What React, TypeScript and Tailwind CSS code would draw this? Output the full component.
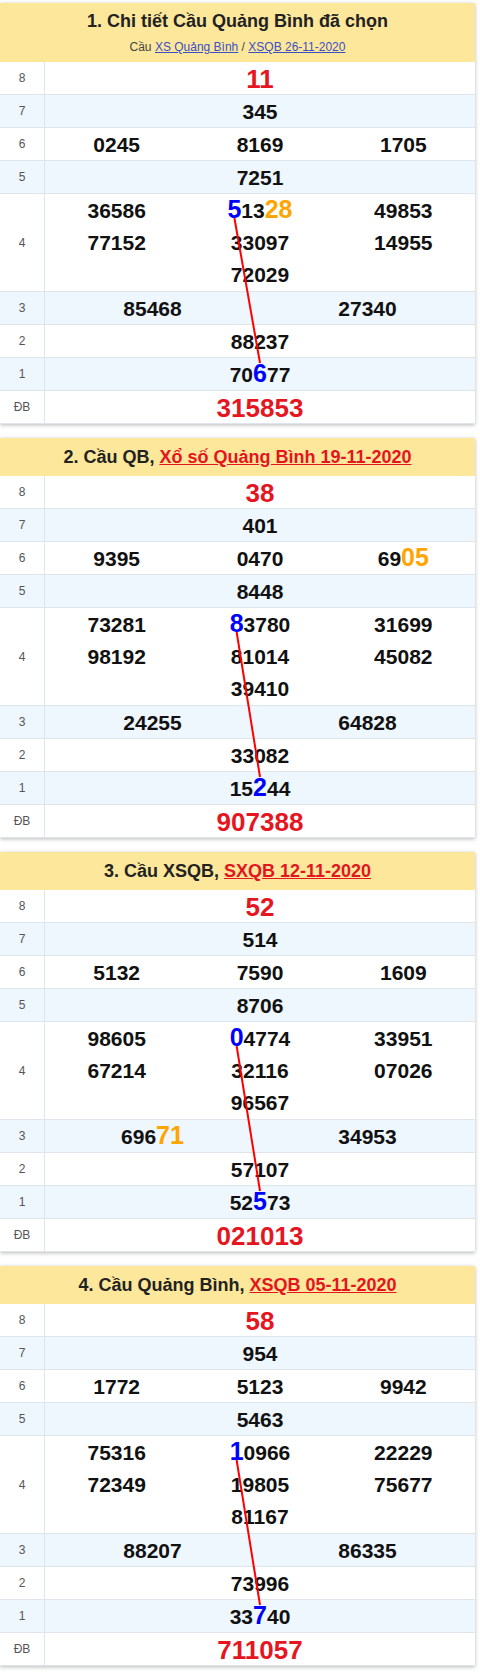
import { useLayoutEffect, useRef, useState, type ReactNode } from 'react'

type Card = {
  title: ReactNode
  g8: string
  g7: string
  g6: string[]
  g5: string
  g4: string[]
  g3: string[]
  g2: string
  g1: string
  db: string
}

const link = 'text-[#e3151f] underline'

const cards: Card[] = [
  {
    title: (
      <div className="px-2 pt-[6px] pb-[6px]">
        <div className="text-[18px] font-bold leading-6 text-[#222]">1. Chi tiết Cầu Quảng Bình đã chọn</div>
        <div className="mt-[5px] text-[12px] leading-[18px] text-[#444]">
          Cầu <a className="text-[#3b4fc4] underline">XS Quảng Bình</a> / <a className="text-[#3b4fc4] underline">XSQB 26-11-2020</a>
        </div>
      </div>
    ),
    g8: '11', g7: '345', g6: ['0245', '8169', '1705'], g5: '7251',
    g4: ['36586', '[5]13{28}', '49853', '77152', '33097', '14955', '72029'],
    g3: ['85468', '27340'], g2: '88237', g1: '70[6]77', db: '315853',
  },
  {
    title: <>2. Cầu QB, <a className={link}>Xổ số Quảng Bình 19-11-2020</a></>,
    g8: '38', g7: '401', g6: ['9395', '0470', '69{05}'], g5: '8448',
    g4: ['73281', '[8]3780', '31699', '98192', '81014', '45082', '39410'],
    g3: ['24255', '64828'], g2: '33082', g1: '15[2]44', db: '907388',
  },
  {
    title: <>3. Cầu XSQB, <a className={link}>SXQB 12-11-2020</a></>,
    g8: '52', g7: '514', g6: ['5132', '7590', '1609'], g5: '8706',
    g4: ['98605', '[0]4774', '33951', '67214', '32116', '07026', '96567'],
    g3: ['696{71}', '34953'], g2: '57107', g1: '52[5]73', db: '021013',
  },
  {
    title: <>4. Cầu Quảng Bình, <a className={link}>XSQB 05-11-2020</a></>,
    g8: '58', g7: '954', g6: ['1772', '5123', '9942'], g5: '5463',
    g4: ['75316', '[1]0966', '22229', '72349', '19805', '75677', '81167'],
    g3: ['88207', '86335'], g2: '73996', g1: '33[7]40', db: '711057',
  },
]

// [x] = blue (cau digit), {x} = orange
function Num({ v, red }: { v: string; red?: boolean }) {
  const parts: ReactNode[] = []
  const re = /\[(\d+)\]|\{(\d+)\}|(\d+)/g
  let m: RegExpExecArray | null
  let i = 0
  while ((m = re.exec(v))) {
    if (m[1]) parts.push(<span key={i++} data-blue className="text-[25px] leading-none text-[#0000ff]">{m[1]}</span>)
    else if (m[2]) parts.push(<span key={i++} className="text-[25px] leading-none text-[#ffa500]">{m[2]}</span>)
    else parts.push(m[3])
  }
  return (
    <span className={red ? 'text-[26px] font-bold text-[#e5161f]' : 'text-[21px] font-bold text-[#111]'}>{parts}</span>
  )
}

function Row({ label, alt, children }: { label: string; alt?: boolean; children: ReactNode }) {
  return (
    <div className={`flex border-b border-[#dfe5ec] ${alt ? 'bg-[#eef6fe]' : 'bg-white'}`}>
      <div className="w-[45px] shrink-0 border-r border-[#dfe5ec] flex items-center justify-center text-[12px] text-[#555]">
        {label}
      </div>
      <div className="flex-1 min-w-0 text-center">{children}</div>
    </div>
  )
}

function Line({ children }: { children: ReactNode }) {
  return <div className="h-[32px] pt-[2px] leading-[30px]">{children}</div>
}

function CauCard({ c, first }: { c: Card; first?: boolean }) {
  const ref = useRef<HTMLDivElement>(null)
  const [pts, setPts] = useState<number[] | null>(null)

  useLayoutEffect(() => {
    const measure = () => {
      const el = ref.current
      if (!el) return
      const box = el.getBoundingClientRect()
      const b = el.querySelectorAll('[data-blue]')
      if (b.length < 2) return
      const s = b[0].getBoundingClientRect()
      const e = b[b.length - 1].getBoundingClientRect()
      setPts([
        s.left + s.width / 2 - box.left,
        s.bottom - box.top - 5,
        e.left + e.width / 2 - box.left,
        e.top - box.top + 4,
      ])
    }
    measure()
    window.addEventListener('load', measure)
    return () => window.removeEventListener('load', measure)
  }, [])

  const g4 = c.g4
  return (
    <div ref={ref} className="relative bg-white shadow-[0_1px_4px_rgba(0,0,0,0.28)]">
      <div className={`bg-[#fde79b] text-center ${first ? '' : 'py-[7px] px-2 text-[18px] font-bold leading-6 text-[#222]'}`}>
        {c.title}
      </div>
      <Row label="8"><Line><Num v={c.g8} red /></Line></Row>
      <Row label="7" alt><Line><Num v={c.g7} /></Line></Row>
      <Row label="6">
        <div className="grid grid-cols-3">
          {c.g6.map((n, k) => <Line key={k}><Num v={n} /></Line>)}
        </div>
      </Row>
      <Row label="5" alt><Line><Num v={c.g5} /></Line></Row>
      <Row label="4">
        <div className="grid grid-cols-3 pb-[1px]">
          <Line><Num v={g4[0]} /></Line>
          <Line><Num v={g4[1]} /></Line>
          <Line><Num v={g4[2]} /></Line>
          <Line><Num v={g4[3]} /></Line>
          <Line><Num v={g4[4]} /></Line>
          <Line><Num v={g4[5]} /></Line>
          <div />
          <Line><Num v={g4[6]} /></Line>
          <div />
        </div>
      </Row>
      <Row label="3" alt>
        <div className="grid grid-cols-2">
          {c.g3.map((n, k) => <Line key={k}><Num v={n} /></Line>)}
        </div>
      </Row>
      <Row label="2"><Line><Num v={c.g2} /></Line></Row>
      <Row label="1" alt><Line><Num v={c.g1} /></Line></Row>
      <Row label="ĐB"><Line><Num v={c.db} red /></Line></Row>
      {pts && (
        <svg className="absolute inset-0 w-full h-full pointer-events-none">
          <line x1={pts[0]} y1={pts[1]} x2={pts[2]} y2={pts[3]} stroke="#ff0000" strokeWidth="2" />
        </svg>
      )}
    </div>
  )
}

export default function App() {
  return (
    <div className="w-[480px] bg-white pt-[3px] pr-[5px] pb-[6px] font-['Liberation_Sans',Arial,sans-serif]">
      <div className="flex flex-col gap-[14px]">
        {cards.map((c, k) => <CauCard key={k} c={c} first={k === 0} />)}
      </div>
    </div>
  )
}
